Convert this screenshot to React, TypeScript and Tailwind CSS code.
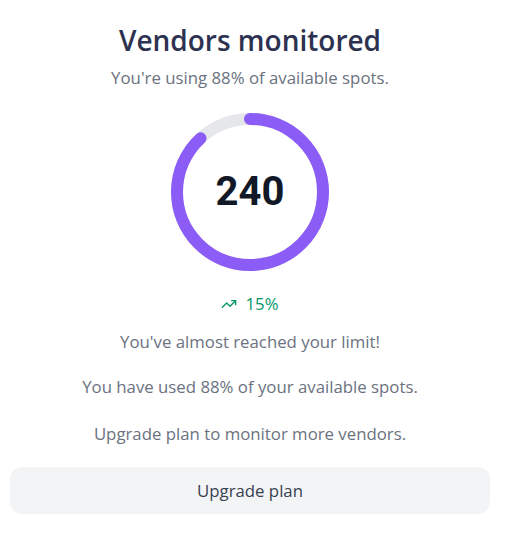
import { TrendingUp } from "lucide-react";

const R = 73;
const C = 2 * Math.PI * R;
const PCT = 0.88;

function Ring() {
  return (
    <div className="relative w-[158px] h-[158px]">
      <svg width="158" height="158" viewBox="0 0 158 158" className="-rotate-90">
        <circle cx="79" cy="79" r={R} fill="none" stroke="#e5e7eb" strokeWidth="12" />
        <circle
          cx="79"
          cy="79"
          r={R}
          fill="none"
          stroke="#8b5cf6"
          strokeWidth="12"
          strokeLinecap="round"
          strokeDasharray={`${C * PCT} ${C}`}
        />
      </svg>
      <div className="absolute inset-0 flex items-center justify-center">
        <span className="text-[40px] leading-none font-bold text-[#111827] font-['Roboto',sans-serif]">240</span>
      </div>
    </div>
  );
}

export default function App() {
  return (
    <div className="w-[511px] h-[544px] bg-white font-['Open_Sans',sans-serif]">
      <div className="w-[480px] ml-[10px] pt-[22px] flex flex-col items-center text-center">
        <h1 className="text-[28px] leading-[36px] font-semibold text-[#2d3250]">Vendors monitored</h1>
        <p className="mt-[8px] text-[16.8px] leading-[24px] text-[#6b7280]">You're using 88% of available spots.</p>
        <div className="mt-[23px]">
          <Ring />
        </div>
        <div className="mt-[21px] flex items-center gap-2 text-[16.8px] leading-[24px] text-[#059669]">
          <TrendingUp size={16} strokeWidth={2} />
          <span>15%</span>
        </div>
        <p className="mt-[14px] text-[16.8px] leading-[24px] text-[#6b7280]">You've almost reached your limit!</p>
        <p className="mt-[21px] text-[16.8px] leading-[24px] text-[#6b7280]">You have used 88% of your available spots.</p>
        <p className="mt-[23px] text-[16.8px] leading-[24px] text-[#6b7280]">Upgrade plan to monitor more vendors.</p>
        <button className="mt-[21px] w-full h-[47px] rounded-xl bg-[#f3f4f6] text-[16.8px] text-[#374151]">
          Upgrade plan
        </button>
      </div>
    </div>
  );
}
